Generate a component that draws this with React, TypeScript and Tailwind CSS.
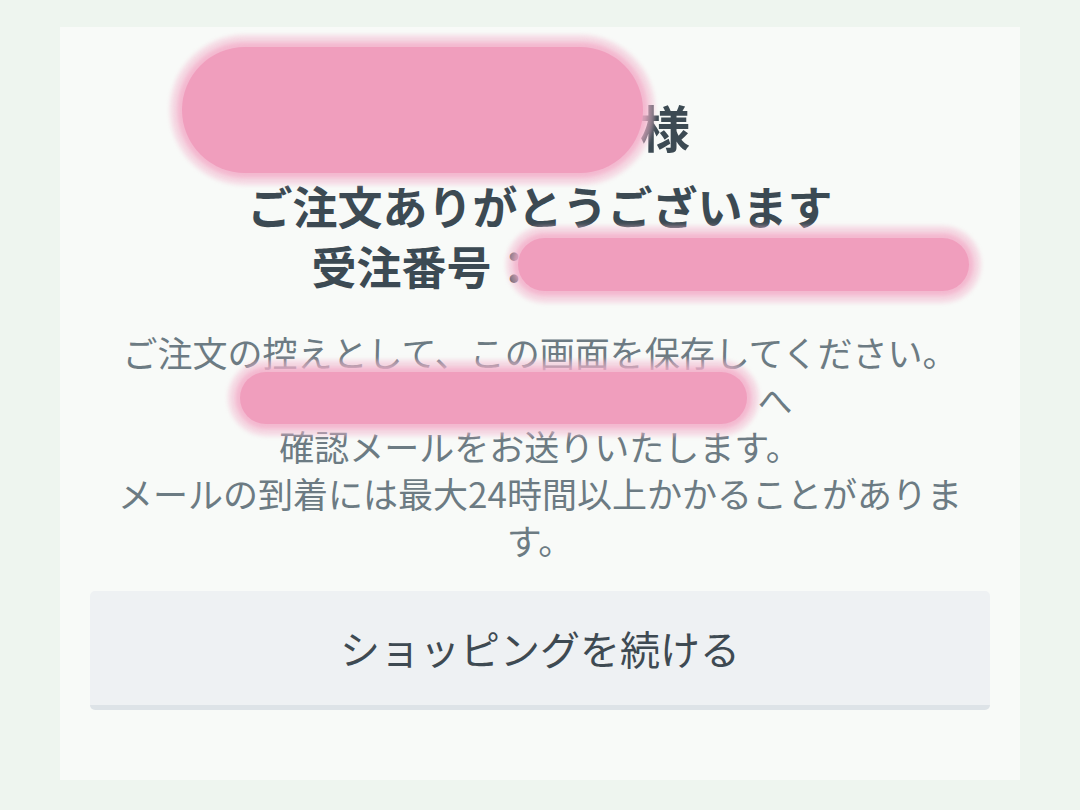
// pink marker blob drawn over the hidden personal info
const Redact = ({ className }: { className: string }) => (
  <span className={"pointer-events-none absolute " + className}>
    <span className="absolute -inset-[12px] rounded-full bg-[#f4bcd1]/50 blur-[2px]" />
    <span className="absolute -inset-[5px] rounded-full bg-[#f2aac6]/70 blur-[2px]" />
    <span className="absolute inset-0 rounded-full bg-[#f09ebd]" />
  </span>
);

const App = () => {
  return (
    <div
      className="min-h-[810px] w-full bg-[#eef5ef] px-[60px] pt-[27px] pb-[30px]"
      style={{ fontFamily: '"Noto Sans CJK JP", "Noto Sans", sans-serif' }}
    >
      <div className="flex h-[753px] flex-col items-center bg-[#f8faf8] px-[30px] pt-[69px]">
        {/* name */}
        <p className="flex h-[60px] items-center text-[50px] leading-[60px] font-bold text-[#3c4a53]">
          <span className="relative inline-block h-[60px] w-[250px]">
            <Redact className="-top-[49px] -bottom-[17px] -left-[208px] right-[-3px]" />
          </span>
          様
        </p>

        {/* thanks */}
        <p className="mt-[20px] text-[45px] leading-[60px] font-bold text-[#3c4a53]">
          ご注文ありがとうございます
        </p>
        <p className="flex items-center text-[45px] leading-[60px] font-bold text-[#3c4a53]">
          受注番号：
          <span className="relative inline-block h-[60px] w-[232px]">
            <Redact className="top-[2px] bottom-[5px] -left-[19px] -right-[200px]" />
          </span>
        </p>

        {/* message */}
        <div className="mt-[32px] w-[860px] text-center text-[35px] leading-[47px] text-[#6c7b83]">
          <p>ご注文の控えとして、この画面を保存してください。</p>
          <p>
            <span className="relative inline-block h-[47px] w-[470px] align-top">
              <Redact className="-top-[3px] -bottom-[2px] -left-[47px] right-[10px]" />
            </span>
            へ
          </p>
          <p>確認メールをお送りいたします。</p>
          <p>メールの到着には最大24時間以上かかることがあります。</p>
        </div>

        {/* continue button */}
        <div className="mt-[28px] flex h-[119px] w-full items-center justify-center rounded-[5px] border-b-[5px] border-[#dde3e7] bg-[#eef1f3] text-[40px] text-[#3e4a52]">
          ショッピングを続ける
        </div>
      </div>
    </div>
  );
};

export default App;
